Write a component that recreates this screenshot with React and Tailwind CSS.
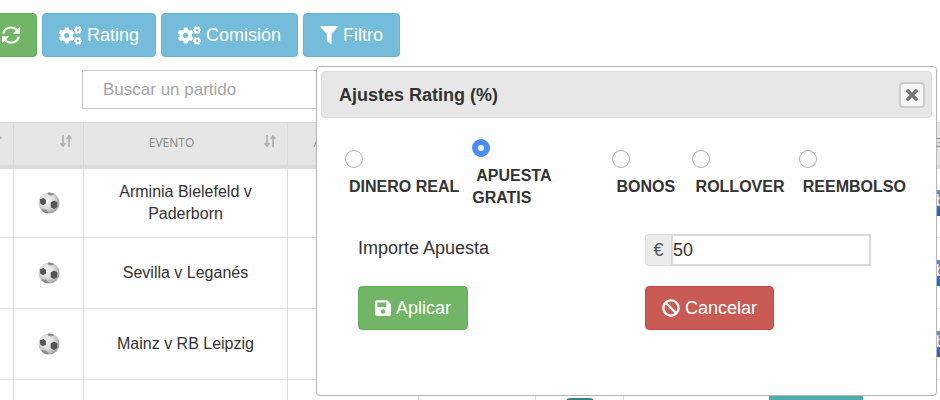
import { useState } from "react";
import { FaBan, FaCogs, FaSave } from "react-icons/fa";

const types = ["Dinero real", "Apuesta gratis", "Bonos", "Rollover", "Reembolso"];
const matches = ["Arminia Bielefeld v Paderborn", "Sevilla v Leganés", "Mainz v RB Leipzig"];

const btn = "flex h-11 items-center gap-[5px] rounded border px-4 text-lg text-white";
const info = "border-[#62b5d6] bg-[#74bcd9]";
const cell = "border border-[#dddddd]";

function RefreshIcon() {
  return (
    <svg className="h-[18px] w-[18px]" viewBox="0 0 18 18" fill="none" stroke="currentColor" strokeWidth="2.2">
      <path d="M1.2 7.6C2.2 3.6 5.400 1.500 9 1.500c2.600 0 4.600 1 6.400 3M16.800 10.400c-1 4-4.200 6.100-7.800 6.100-2.600 0-4.600-1-6.400-3" />
      <path d="M18 .6v7.200h-7.200zM0 17.400v-7.200h7.200z" fill="currentColor" stroke="none" />
    </svg>
  );
}

function FilterIcon() {
  return (
    <svg className="h-[18px] w-[18px]" viewBox="0 0 18 18" fill="currentColor">
      <path d="M.4 0h17.2q.6.3.2.8L11.6 8v9.6q-.2.6-.8.3L7.2 15.600 6.800 15V8L.2.8Q-.2.3.4 0z" />
    </svg>
  );
}

function SortIcon() {
  return (
    <svg className="absolute top-3 right-[11px] h-3 w-3" viewBox="0 0 12 12" fill="none" stroke="#b2b2b2" strokeWidth="1.8">
      <path d="M3 0v10M.6 8 3 11l2.4-3M9 12V2M6.6 4 9 1l2.4 3" />
    </svg>
  );
}

function Ball() {
  return (
    <svg className="mx-auto h-[22px] w-[22px]" viewBox="0 0 22 22">
      <defs>
        <radialGradient id="ball" cx="42%" cy="40%" r="62%">
          <stop offset="0" stopColor="#f8f8f8" />
          <stop offset="0.55" stopColor="#dcdcdc" />
          <stop offset="1" stopColor="#a0a0a0" />
        </radialGradient>
        <clipPath id="round"><circle cx="11" cy="11" r="10.5" /></clipPath>
      </defs>
      <circle cx="11" cy="11" r="10.5" fill="url(#ball)" />
      <g clipPath="url(#round)" fill="#555555">
        <path d="M2 7.200 5.400 6 8 8 7.800 11.800 5 13.200 2.200 11.400z" />
        <path d="m12.600 10.600 3.600-2.200 3.200 2-.2 4.600-3.200 2-3.200-1.800z" />
        <path d="M9.500 0h8l-1.500 2.600-3 1-3-1z" fill="#8c8c8c" />
        <path d="m4 17 4 .8 2.400 2.400-1 2H4z" fill="#8c8c8c" />
      </g>
    </svg>
  );
}

function Head({ children, pad = "pr-7" }) {
  return (
    <th className={`relative h-11 border border-b-4 border-[#dadada] bg-[#e6e6e6] pb-0.5 font-['Open_Sans',sans-serif] text-xs font-normal text-[#888888] ${pad}`}>
      {children}
      <SortIcon />
    </th>
  );
}

function Settings() {
  const [type, setType] = useState(types[1]);
  const [amount, setAmount] = useState("50");

  return (
    <div role="dialog" aria-labelledby="title" className="absolute top-[66px] right-[3px] left-[316px] rounded border border-[#b5b5b5] bg-[#fefefe] p-1 pb-[65px]">
      <div className="flex h-[47px] items-center justify-between rounded border border-[#dddddd] bg-[#e7e7e7] pr-1.5 pl-[17px]">
        <h2 id="title" className="text-lg font-bold">Ajustes Rating (%)</h2>
        <button aria-label="Cerrar" className="flex h-[26px] w-[26px] items-center justify-center rounded border-2 border-[#cccccc] bg-[#f6f6f6]">
          <svg className="h-3 w-3" viewBox="0 0 12 12" stroke="#777777" strokeWidth="3.6" strokeLinecap="round">
            <path d="m2 2 8 8M10 2l-8 8" />
          </svg>
        </button>
      </div>

      <div className="mt-[21px] grid grid-cols-[127fr_140fr_79fr_107fr_133fr] items-center pl-6">
        {types.map(t => (
          <label key={t} className="flex flex-col gap-2 text-base leading-[22px] font-bold uppercase">
            <input
              type="radio"
              name="type"
              checked={type === t}
              onChange={() => setType(t)}
              className="h-[18px] w-[18px] appearance-none rounded-full border border-[#b0b0b0] bg-white checked:border-[6px] checked:border-[#4b8bf5]"
            />
            <span className="indent-1">{t}</span>
          </label>
        ))}
      </div>

      <div className="mt-[25px] grid grid-cols-2 gap-y-5 pl-[37px] text-lg">
        <label htmlFor="amount">Importe Apuesta</label>
        <div className="flex h-8 w-[226px]">
          <span className="flex w-[26px] items-center justify-center rounded-l border border-r-0 border-[#dddddd] bg-[#ebebeb] text-[#555555]">€</span>
          <input id="amount" value={amount} onChange={e => setAmount(e.target.value)} className="min-w-0 flex-1 border-2 border-[#d9d9d9] bg-white" />
        </div>
        <div>
          <button className={`${btn} border-[#62ae57] bg-[#72b566]`}><FaSave className="w-4" /> Aplicar</button>
        </div>
        <div>
          <button className={`${btn} border-[#c64b45] bg-[#c95b54]`}><FaBan /> Cancelar</button>
        </div>
      </div>
    </div>
  );
}

export default function App() {
  return (
    <div className="relative h-screen overflow-hidden bg-[#fefefe] font-['Liberation_Sans',sans-serif] text-[#333333]">
      <div className="-ml-[15px] flex gap-[5px] pt-[13px]">
        <button aria-label="Actualizar" className={`${btn} border-[#62ae57] bg-[#72b566]`}><RefreshIcon /></button>
        <button className={`${btn} ${info}`}><FaCogs className="h-[23px] w-[23px]" /> Rating</button>
        <button className={`${btn} ${info}`}><FaCogs className="h-[23px] w-[23px]" /> Comisión</button>
        <button className={`${btn} ${info}`}><FilterIcon /> Filtro</button>
      </div>

      <input
        aria-label="Buscar un partido"
        placeholder="Buscar un partido"
        className="mt-[13px] ml-[82px] block h-[39px] w-80 border border-[#c8c8c8] bg-white px-5 text-[17px] placeholder:text-[#a5a5a5]"
      />

      <table className="mt-[13px] -ml-[57px] w-[1066px] table-fixed border-collapse text-center text-base leading-[22px]">
        <colgroup>
          <col className="w-[70px]" />
          <col className="w-[70px]" />
          <col className="w-[204px]" />
          <col className="w-[131px]" />
          <col className="w-[117px]" />
          <col className="w-[88px]" />
          <col />
        </colgroup>
        <thead>
          <tr>
            <Head />
            <Head />
            <Head>EVENTO</Head>
            <Head>APUESTA</Head>
            <Head />
            <Head />
            <Head pad="pr-[66px] text-right">RATING</Head>
          </tr>
        </thead>
        <tbody>
          {matches.map(m => (
            <tr key={m} className="h-[71px]">
              <td className={cell} />
              <td className={cell}><Ball /></td>
              <td className={`${cell} px-8`}>{m}</td>
              <td className={cell} />
              <td className={cell} />
              <td className={cell} />
              <td className={cell}>
                <span className="mr-[55px] ml-auto block h-[26px] w-[26px] bg-linear-to-b from-[#5b93cf] to-[#2360ac] font-bold text-white">b</span>
              </td>
            </tr>
          ))}
          <tr className="h-[71px] align-top">
            <td className={cell} />
            <td className={cell} />
            <td className={cell} />
            <td className={cell} />
            <td className={cell} />
            <td className={`${cell} pt-[18px]`}><span className="mx-auto block h-7 w-7 rounded bg-[#3c7f8c]" /></td>
            <td className={`${cell} pt-4`}><span className="mx-auto block h-9 w-[94px] bg-[#4dacae]" /></td>
          </tr>
        </tbody>
      </table>

      <Settings />
    </div>
  );
}
